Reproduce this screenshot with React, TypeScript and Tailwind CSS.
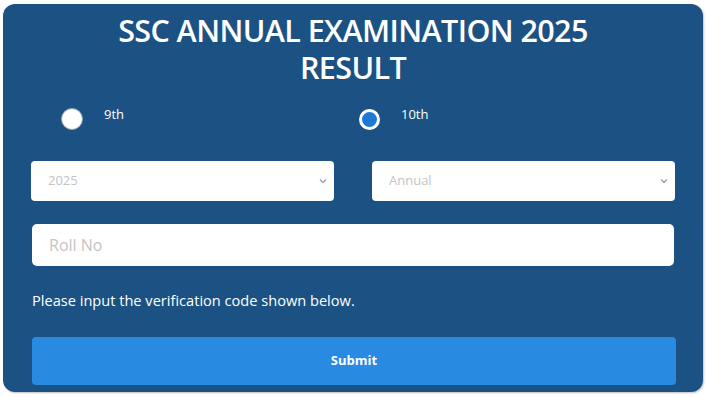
import React from "react";

function Chevron() {
  return (
    <svg width="10" height="10" viewBox="0 0 10 10" className="text-gray-400">
      <path d="M2 3.5 L5 6.5 L8 3.5" fill="none" stroke="currentColor" strokeWidth="1.3" />
    </svg>
  );
}

export default function App() {
  return (
    <div className="w-[707px] h-[397px] bg-white pt-[4px] pl-[3px] font-['Open_Sans',sans-serif]">
      <div className="w-[700px] h-[388px] rounded-[12px] bg-[#1b5283] px-[28px] pt-[8px] shadow-[1px_1px_2px_rgba(0,0,0,0.25)]">
        <h1 className="text-center text-white text-[30.5px] leading-[37px] font-semibold tracking-[-0.6px]">
          SSC ANNUAL EXAMINATION 2025
          <br />
          RESULT
        </h1>

        <div className="flex mt-[21px] h-[24px] items-center">
          <label className="flex items-center ml-[30px] w-[298px]">
            <span className="w-[22px] h-[22px] rounded-full bg-white border border-gray-400" />
            <span className="ml-[21px] -mt-[8px] text-white text-[13px]">9th</span>
          </label>
          <label className="flex items-center">
            <span className="w-[21px] h-[21px] rounded-full bg-[#1e78d6] border-[3px] border-white" />
            <span className="ml-[21px] -mt-[8px] text-white text-[13px]">10th</span>
          </label>
        </div>

        <div className="flex gap-[38px] mt-[30px]">
          <div className="flex-1 h-[40px] bg-white rounded-[4px] flex items-center justify-between pl-[17px] pr-[6px]">
            <span className="text-[13px] text-[#c4c4c4]">2025</span>
            <Chevron />
          </div>
          <div className="flex-1 h-[40px] bg-white rounded-[4px] flex items-center justify-between pl-[17px] pr-[6px]">
            <span className="text-[13px] text-[#c4c4c4]">Annual</span>
            <Chevron />
          </div>
        </div>

        <div className="mt-[23px] h-[42px] bg-white rounded-[5px] flex items-center pl-[17px] mx-[1px]">
          <span className="text-[16px] text-[#c4c4c4]">Roll No</span>
        </div>

        <p className="mt-[24px] text-white text-[14.6px] leading-[20px] pl-[1px]">
          Please input the verification code shown below.
        </p>

        <button className="mt-[27px] w-[644px] ml-[1px] h-[48px] bg-[#288ae0] rounded-[4px] text-white text-[13px] font-bold">
          Submit
        </button>
      </div>
    </div>
  );
}
